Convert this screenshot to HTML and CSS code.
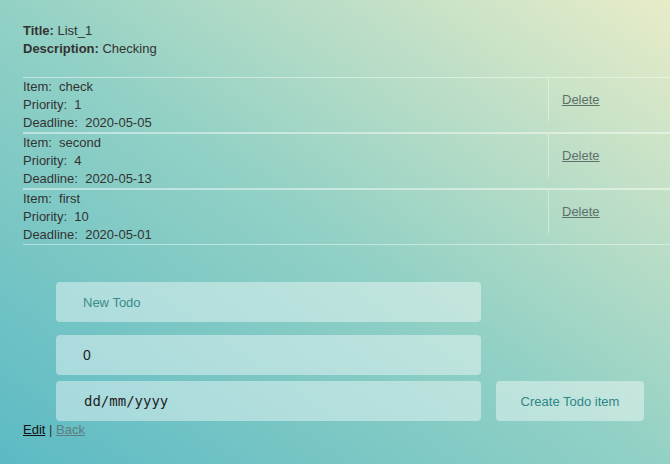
FILE: index.html
```html
<!DOCTYPE html>
<html>
<head>
<meta charset="utf-8">
<link rel="stylesheet" href="styles.css">
</head>
<body>
<div class="page">
  <div class="info">
    <div><b>Title:</b> List_1</div>
    <div><b>Description:</b> Checking</div>
  </div>
  <div class="list">
    <div class="row">
      <div class="details">
        <div>Item:&nbsp; check</div>
        <div>Priority:&nbsp; 1</div>
        <div>Deadline:&nbsp; 2020-05-05</div>
      </div>
      <div class="action"><a href="#" class="del">Delete</a></div>
    </div>
    <div class="row">
      <div class="details">
        <div>Item:&nbsp; second</div>
        <div>Priority:&nbsp; 4</div>
        <div>Deadline:&nbsp; 2020-05-13</div>
      </div>
      <div class="action"><a href="#" class="del">Delete</a></div>
    </div>
    <div class="row">
      <div class="details">
        <div>Item:&nbsp; first</div>
        <div>Priority:&nbsp; 10</div>
        <div>Deadline:&nbsp; 2020-05-01</div>
      </div>
      <div class="action"><a href="#" class="del">Delete</a></div>
    </div>
  </div>
  <form class="form">
    <input class="field field-name" type="text" placeholder="New Todo">
    <input class="field field-num" type="text" value="0">
    <div class="last">
      <input class="field field-date" type="text" placeholder="dd/mm/yyyy">
      <button class="create" type="button">Create Todo item</button>
    </div>
  </form>
  <div class="links"><a href="#" class="edit">Edit</a> | <a href="#" class="back">Back</a></div>
</div>
</body>
</html>
```
FILE: styles.css
```css
html, body {
  margin: 0;
  padding: 0;
  height: 100%;
}
body {
  background: linear-gradient(to top right, #5cbac4 0%, #93d1c5 50%, #e8ecc8 100%);
  font-family: "Liberation Sans", Arial, sans-serif;
  font-size: 13px;
  line-height: 18px;
  color: #333;
  overflow: hidden;
}
.page {
  padding: 22px 0 0 23px;
}
.info {
  margin-bottom: 19px;
}
.list {
  display: flex;
  flex-direction: column;
}
.row {
  display: flex;
  border-top: 1px solid rgba(255, 255, 255, 0.45);
  border-bottom: 1px solid rgba(255, 255, 255, 0.45);
  height: 54px;
}
.details {
  width: 525px;
}
.action {
  flex: 1;
  align-self: flex-start;
  height: 43px;
  box-sizing: border-box;
  padding: 13px 0 0 13px;
  border-left: 1px solid rgba(255, 255, 255, 0.4);
}
.del {
  color: #5f6f6c;
}
.form {
  display: flex;
  flex-direction: column;
  align-items: flex-start;
  margin: 37px 0 0 33px;
}
.field {
  width: 425px;
  height: 40px;
  box-sizing: border-box;
  border: none;
  border-radius: 4px;
  background: rgba(255, 255, 255, 0.42);
  padding: 0 0 0 27px;
  font-family: "Liberation Sans", Arial, sans-serif;
  font-size: 13px;
  color: #222;
  outline: none;
}
.field::placeholder {
  color: #3a8b8b;
}
.field-num {
  margin-top: 13px;
  font-size: 14px;
}
.last {
  display: flex;
  gap: 15px;
  margin-top: 6px;
}
.field-date {
  font-family: "DejaVu Sans Mono", monospace;
  font-size: 14px;
  padding-left: 28px;
  padding-bottom: 1px;
}
.field-date::placeholder {
  color: #222;
}
.create {
  width: 148px;
  height: 40px;
  border: none;
  border-radius: 4px;
  background: rgba(255, 255, 255, 0.42);
  color: #2e8585;
  font-family: "Liberation Sans", Arial, sans-serif;
  font-size: 13px;
}
.links {
  margin-top: 0;
  color: #333;
}
.edit {
  color: #111;
}
.back {
  color: #5e7d7d;
}
```
